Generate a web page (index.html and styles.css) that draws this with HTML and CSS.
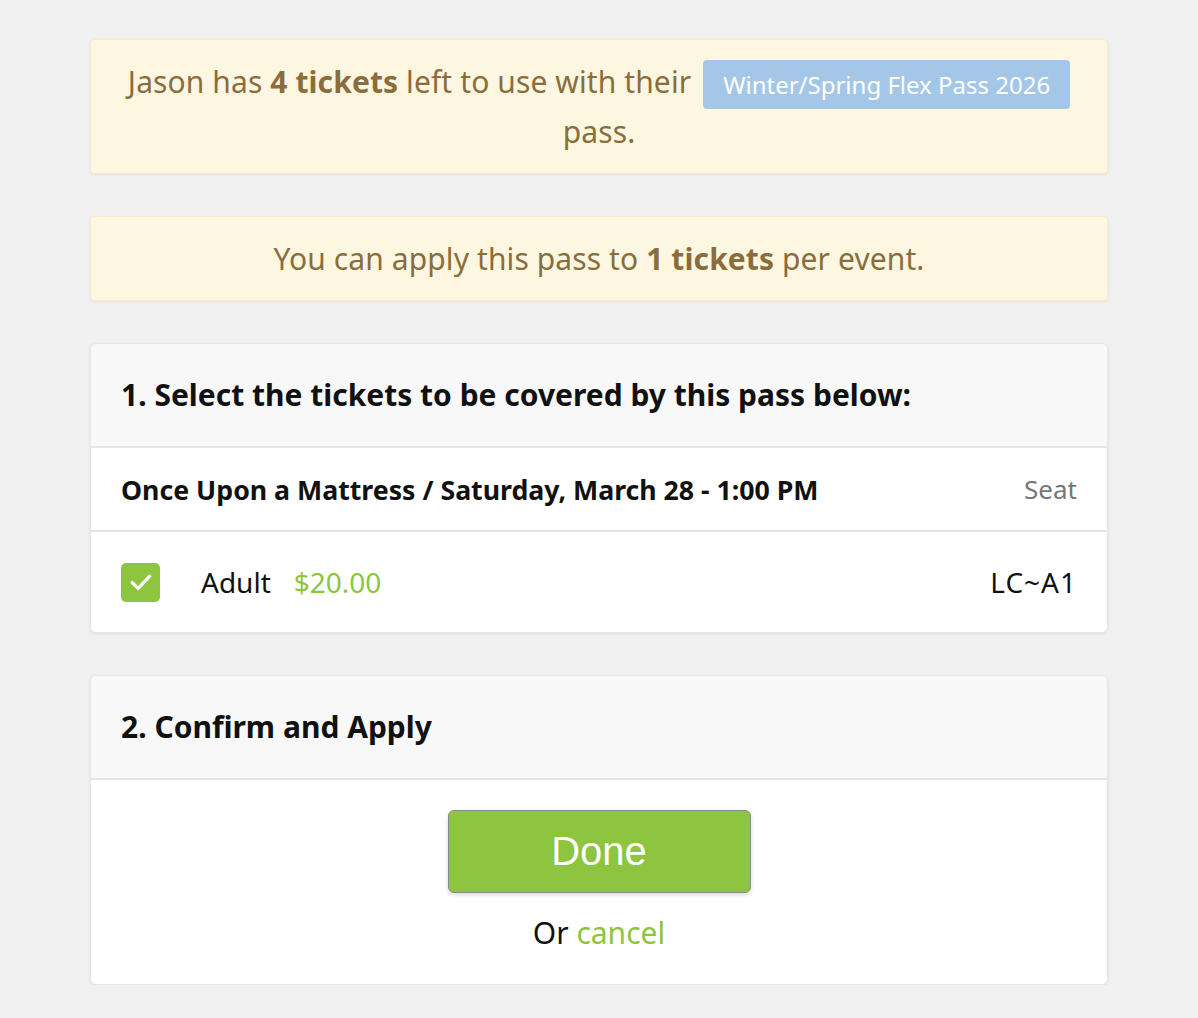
FILE: index.html
```html
<!DOCTYPE html>
<html lang="en">
<head>
<meta charset="utf-8">
<title>Apply Pass</title>
<link rel="stylesheet" href="styles.css">
</head>
<body>
<main class="page">
  <div class="alert">
    Jason has <strong>4 tickets</strong> left to use with their <span class="badge">Winter/Spring Flex Pass 2026</span> pass.
  </div>
  <div class="alert">
    You can apply this pass to <strong>1 tickets</strong> per event.
  </div>

  <section class="card">
    <header class="card-header">1. Select the tickets to be covered by this pass below:</header>
    <div class="row event-row">
      <span class="event-title">Once Upon a Mattress / Saturday, March 28 - 1:00 PM</span>
      <span class="seat-label">Seat</span>
    </div>
    <div class="row ticket-row">
      <span class="checkbox">
        <svg viewBox="0 0 24 24" width="28" height="28"><path d="M4.5 12.5l5 5L19.5 7" fill="none" stroke="#fff" stroke-width="2.8" stroke-linecap="round" stroke-linejoin="round"/></svg>
      </span>
      <span class="ticket-type">Adult</span>
      <span class="price">$20.00</span>
      <span class="seat">LC~A1</span>
    </div>
  </section>

  <section class="card">
    <header class="card-header">2. Confirm and Apply</header>
    <div class="confirm-body">
      <button class="done-btn" type="button">Done</button>
      <p class="or-cancel">Or <a href="#" class="cancel">cancel</a></p>
    </div>
  </section>
</main>
</body>
</html>
```
FILE: styles.css
```css
* { box-sizing: border-box; }
html, body { margin: 0; padding: 0; }
body {
  background: #f0f0f0;
  font-family: "Noto Sans", "Lato", sans-serif;
  color: #111;
}
.page {
  width: 1018px;
  margin: 0 auto;
  padding-top: 39px;
  display: flex;
  flex-direction: column;
  gap: 42px;
}
.alert {
  background: #fdf7e2;
  border: 1px solid #f7ecc8;
  border-radius: 4px;
  box-shadow: 0 1px 3px rgba(0,0,0,0.06);
  color: #8a6d3b;
  font-size: 30px;
  letter-spacing: 0.1px;
  line-height: 45px;
  text-align: center;
  padding: 19px 30px;
}
.alert strong { font-weight: 700; }
.badge {
  display: inline-block;
  background: #a4c7e8;
  color: #fff;
  font-size: 24px;
  letter-spacing: 0;
  line-height: 37px;
  padding: 6px 20px;
  border-radius: 4px;
  vertical-align: middle;
  margin-left: 4px;
}
.card {
  background: #fff;
  border: 1px solid #e6e6e8;
  border-radius: 6px;
  box-shadow: 0 1px 3px rgba(0,0,0,0.08);
  overflow: hidden;
}
.card-header {
  background: #f8f8f8;
  border-bottom: 2px solid #e6e6e8;
  font-size: 30px;
  font-weight: 700;
  line-height: 45px;
  padding: 28px 30px 29px;
}
.row {
  display: flex;
  align-items: center;
  padding: 0 30px;
  font-size: 28px;
}
.event-row {
  height: 84px;
  border-bottom: 2px solid #e6e6e8;
}
.event-title { font-weight: 700; flex: 1; font-size: 26.7px; }
.seat-label { color: #777; font-size: 26px; }
.ticket-row { height: 100px; }
.checkbox {
  width: 39px;
  height: 39px;
  border-radius: 5px;
  background: #8dc540;
  display: flex;
  align-items: center;
  justify-content: center;
  margin-right: 41px;
}
.checkbox svg { display: block; }
.ticket-type { margin-right: 23px; }
.price { color: #8dc540; flex: 1; }
.seat { color: #111; letter-spacing: 1px; }
.confirm-body {
  display: flex;
  flex-direction: column;
  align-items: center;
  padding: 30px 30px 30px;
}
.done-btn {
  width: 303px;
  height: 83px;
  background: #8dc540;
  border: 1px solid #8a8a8a;
  border-radius: 6px;
  box-shadow: 0 2px 5px rgba(0,0,0,0.15);
  color: #fff;
  font-family: "Liberation Sans", Arial, sans-serif;
  font-size: 40px;
  cursor: pointer;
}
.or-cancel {
  margin: 19px 0 0;
  font-size: 30px;
  line-height: 42px;
}
.cancel { color: #8dc540; text-decoration: none; }
```
